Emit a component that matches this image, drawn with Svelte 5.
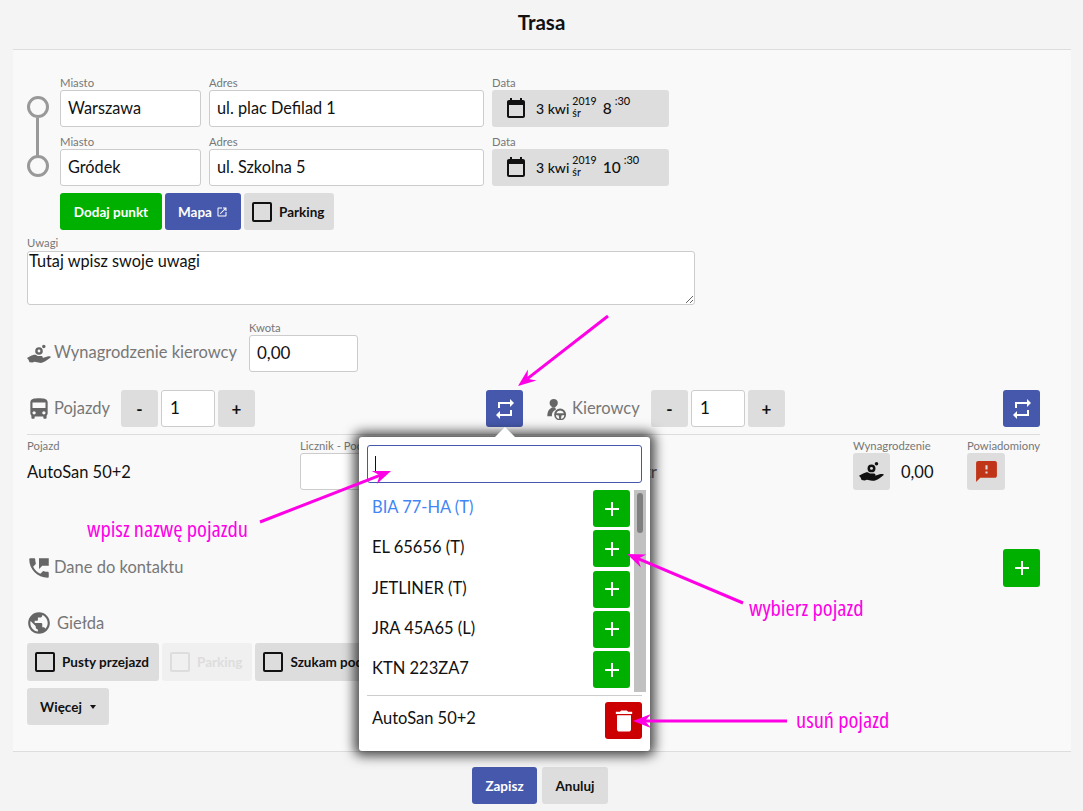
<script lang="ts">
  const repeatPath = "M7 7h10v3l4-4-4-4v3H5v6h2V7zm10 10H7v-3l-4 4 4 4v-3h12v-6h-2v4z";
  const calendarPath = "M19 4h-1V2h-2v2H8V2H6v2H5c-1.11 0-2 .9-2 2v14c0 1.1.89 2 2 2h14c1.1 0 2-.9 2-2V6c0-1.1-.9-2-2-2zm0 16H5V9h14v11z";
  const plusPath = "M19 13h-6v6h-2v-6H5v-2h6V5h2v6h6v2z";

  const points = [
    { city: "Warszawa", address: "ul. plac Defilad 1", hour: "8" },
    { city: "Gródek", address: "ul. Szkolna 5", hour: "10" },
  ];

  const vehicles = [
    { name: "BIA 77-HA (T)", link: true },
    { name: "EL 65656 (T)" },
    { name: "JETLINER (T)" },
    { name: "JRA 45A65 (L)" },
    { name: "KTN 223ZA7" },
  ];

  // annotation arrows drawn over the screenshot: [from x, from y, tip x, tip y]
  const arrows = [
    [608, 316, 518, 386],
    [260, 522, 391, 471],
    [743, 603, 627, 554],
    [787, 721, 633, 721],
  ].map(([x1, y1, x2, y2]) => {
    const len = Math.hypot(x2 - x1, y2 - y1);
    const dx = (x2 - x1) / len;
    const dy = (y2 - y1) / len;
    const head = [
      [x2, y2],
      [x2 - dx * 18 - dy * 7, y2 - dy * 18 + dx * 7],
      [x2 - dx * 12, y2 - dy * 12],
      [x2 - dx * 18 + dy * 7, y2 - dy * 18 - dx * 7],
    ];
    return { x1, y1, x2: x2 - dx * 12, y2: y2 - dy * 12, head: head.map((p) => p.join(",")).join(" ") };
  });
</script>

{#snippet handIcon()}
  <svg viewBox="0 0 24 24" class="icon-fill">
    <circle cx="12" cy="9" r="3.800" />
    <circle cx="12" cy="9" r="1.400" fill="var(--hole)" />
    <circle cx="16.800" cy="4.500" r="1.700" />
    <path d="M0 16l4-2.200 3-1c1.500-.2 2.500.4 3.500 1.200h3.500c1.200 0 1.800.6 1.800 1.300 0 .3-.1.6-.3.8l5-1.600c1.400-.4 3-.2 3.500.6-2 1.900-5.500 4.400-8.500 5.500-1 .4-2 .4-3 .2l-5-1-2 .8-3-.4-1-2.500z" />
  </svg>
{/snippet}

{#snippet plusButton()}
  <button class="btn square green">
    <svg viewBox="0 0 24 24" class="icon-24"><path d={plusPath} /></svg>
  </button>
{/snippet}

{#snippet stepper()}
  <button class="btn square grey step">-</button>
  <input class="count" value="1" />
  <button class="btn square grey step">+</button>
{/snippet}

{#snippet checkButton(label: string, disabled = false)}
  <button class="btn grey check" class:disabled>
    <span class="box"></span>{label}
  </button>
{/snippet}

<div class="page">
  <h1>Trasa</h1>

  <main class="panel">
    <section class="route">
      {#each points as point, i}
        <div class="point">
          <div class="marker" class:first={i === 0}></div>
          <label class="field city">
            <span>Miasto</span>
            <input value={point.city} />
          </label>
          <label class="field address">
            <span>Adres</span>
            <input value={point.address} />
          </label>
          <div class="field date">
            <span>Data</span>
            <button class="date-btn">
              <svg viewBox="0 0 24 24" class="calendar"><path d={calendarPath} /><rect x="5" y="5" width="14" height="4" /></svg>
              <b class="day">3 kwi</b>
              <span class="year"><i>2019</i><i>śr</i></span>
              <b class="hour">{point.hour}</b>
              <i class="minute">:30</i>
            </button>
          </div>
        </div>
      {/each}

      <div class="route-actions">
        <button class="btn green">Dodaj punkt</button>
        <button class="btn blue map">
          Mapa
          <svg viewBox="0 0 24 24" class="external"><path d="M19 19H5V5h7V3H5c-1.11 0-2 .9-2 2v14c0 1.1.89 2 2 2h14c1.1 0 2-.9 2-2v-7h-2v7zM14 3v2h3.59l-9.83 9.83 1.41 1.41L19 6.41V10h2V3h-7z" /></svg>
        </button>
        {@render checkButton("Parking")}
      </div>
    </section>

    <label class="field notes">
      <span>Uwagi</span>
      <textarea>Tutaj wpisz swoje uwagi</textarea>
    </label>

    <div class="pay">
      <div class="heading pay-title">
        <span class="hand-icon">{@render handIcon()}</span>
        Wynagrodzenie kierowcy
      </div>
      <label class="field amount">
        <span>Kwota</span>
        <input value="0,00" />
      </label>
    </div>

    <div class="fleet">
      <div class="fleet-side left">
        <div class="heading fleet-title">
          <svg viewBox="0 0 24 24" class="head-icon icon-fill"><path d="M4 16c0 .88.39 1.67 1 2.22V20c0 .55.45 1 1 1h1c.55 0 1-.45 1-1v-1h8v1c0 .55.45 1 1 1h1c.55 0 1-.45 1-1v-1.78c.61-.55 1-1.34 1-2.22V6c0-3.5-3.58-4-8-4s-8 .5-8 4v10zm3.5 1c-.83 0-1.5-.67-1.5-1.5S6.67 14 7.5 14s1.5.67 1.5 1.5S8.33 17 7.5 17zm9 0c-.83 0-1.5-.67-1.5-1.5s.67-1.5 1.5-1.5 1.5.67 1.5 1.5-.67 1.5-1.5 1.5zm1.5-6H6V6h12v5z" /></svg>
          Pojazdy
        </div>
        {@render stepper()}
        <button class="btn square blue swap">
          <svg viewBox="0 0 24 24" class="icon-24"><path d={repeatPath} /></svg>
        </button>
      </div>
      <div class="fleet-side right">
        <div class="heading fleet-title drivers">
          <svg viewBox="0 0 24 24" class="driver-icon icon-fill">
            <circle cx="9.500" cy="5.500" r="4.500" />
            <path d="M8 10h3l1 2.500a7.500 7.500 0 0 0-4.500 7.500H2.500c0-4 1-7 3.500-8.500z" />
            <path fill-rule="evenodd" d="M16.500 11.500a6.500 6.500 0 1 0 0 13 6.500 6.500 0 0 0 0-13zm0 2a4.500 4.500 0 0 1 4.200 3h-8.400a4.500 4.500 0 0 1 4.200-3zm-4.500 5l3 .5 .5 3.900a4.500 4.500 0 0 1-3.500-4.400zm9 0a4.500 4.500 0 0 1-3.500 4.400l.5-3.900z" />
          </svg>
          Kierowcy
        </div>
        {@render stepper()}
        <button class="btn square blue swap">
          <svg viewBox="0 0 24 24" class="icon-24"><path d={repeatPath} /></svg>
        </button>
      </div>
    </div>

    <div class="assignment">
      <div class="field vehicle">
        <span>Pojazd</span>
        <strong>AutoSan 50+2</strong>
      </div>
      <label class="field counter">
        <span>Licznik - Początek</span>
        <input />
      </label>
      <div class="driver-name">Piotr</div>
      <div class="field wage">
        <span>Wynagrodzenie</span>
        <div class="wage-row">
          <button class="btn square grey dark-hand">{@render handIcon()}</button>
          <strong>0,00</strong>
        </div>
      </div>
      <div class="field notified">
        <span>Powiadomiony</span>
        <button class="btn square grey">
          <svg viewBox="0 0 24 24" class="alert"><path d="M20 2H4c-1.100 0-1.990.9-1.990 2L2 22l4-4h14c1.100 0 2-.9 2-2V4c0-1.100-.9-2-2-2zm-7 12h-2v-2h2v2zm0-4h-2V6h2v4z" /></svg>
        </button>
      </div>
    </div>

    <div class="contact">
      <div class="heading">
        <svg viewBox="0 0 24 24" class="head-icon icon-fill"><path d="M20 15.500c-1.250 0-2.450-.2-3.570-.57-.35-.11-.74-.03-1.020.24l-2.200 2.200c-2.830-1.440-5.150-3.750-6.590-6.580l2.200-2.210c.28-.27.36-.66.25-1.010C8.700 6.450 8.500 5.250 8.500 4c0-.55-.45-1-1-1H4c-.55 0-1 .45-1 1 0 9.390 7.610 17 17 17 .55 0 1-.45 1-1v-3.500c0-.55-.45-1-1-1zM12 3v10l3-3h6V3h-9z" /></svg>
        Dane do kontaktu
      </div>
      {@render plusButton()}
    </div>

    <div class="heading exchange">
      <svg viewBox="0 0 24 24" class="globe icon-fill"><path d="M12 2C6.480 2 2 6.480 2 12s4.480 10 10 10 10-4.480 10-10S17.520 2 12 2zm-1 17.930c-3.950-.49-7-3.850-7-7.930 0-.62.08-1.210.21-1.790L9 15v1c0 1.100.9 2 2 2v1.930zm6.900-2.540c-.26-.81-1-1.390-1.900-1.390h-1v-3c0-.55-.45-1-1-1H8v-2h2c.55 0 1-.45 1-1V7h2c1.100 0 2-.9 2-2v-.41c2.930 1.190 5 4.060 5 7.410 0 2.080-.8 3.970-2.100 5.390z" /></svg>
      Giełda
    </div>
    <div class="exchange-actions">
      {@render checkButton("Pusty przejazd")}
      {@render checkButton("Parking", true)}
      {@render checkButton("Szukam pod")}
    </div>
    <button class="btn grey more">Więcej <span class="caret"></span></button>
  </main>

  <footer>
    <button class="btn blue save">Zapisz</button>
    <button class="btn grey cancel">Anuluj</button>
  </footer>

  <div class="popover">
    <div class="search">
      <input />
      <span class="text-caret"></span>
    </div>
    <div class="list">
      <div class="rows">
        {#each vehicles as vehicle}
          <div class="row">
            <span class:link={vehicle.link}>{vehicle.name}</span>
            {@render plusButton()}
          </div>
        {/each}
      </div>
      <div class="scrollbar"><div class="thumb"></div></div>
    </div>
    <div class="selected">
      <span>AutoSan 50+2</span>
      <button class="btn square red">
        <svg viewBox="0 0 24 24"><path d="M6 19c0 1.100.9 2 2 2h8c1.100 0 2-.9 2-2V7H6v12zM19 4h-3.500l-1-1h-5l-1 1H5v2h14V4z" /></svg>
      </button>
    </div>
  </div>

  <svg class="arrows" viewBox="0 0 1083 811">
    {#each arrows as arrow}
      <line x1={arrow.x1} y1={arrow.y1} x2={arrow.x2} y2={arrow.y2} />
      <polygon points={arrow.head} />
    {/each}
  </svg>
  <span class="note note-search">wpisz nazwę pojazdu</span>
  <span class="note note-pick">wybierz pojazd</span>
  <span class="note note-remove">usuń pojazd</span>
</div>

<style>
  :global(body) {
    background: #f4f4f4;
    font-family: Lato, "Open Sans", sans-serif;
    color: #111;
  }

  .page {
    position: relative;
    width: 1083px;
    height: 811px;
    overflow: hidden;
  }

  h1 {
    margin: 0;
    height: 49px;
    line-height: 45px;
    text-align: center;
    font-size: 20.500px;
    font-weight: 700;
  }

  .panel {
    box-sizing: border-box;
    height: 703px;
    margin: 0 12px 0 13px;
    padding: 27px 31px 0 14px;
    background: #f9f9f9;
    border-top: 1px solid #ddd;
    border-bottom: 1px solid #ddd;
  }

  input,
  textarea {
    box-sizing: border-box;
    border: 1px solid #ccc;
    border-radius: 3px;
    background: #fff;
    color: #111;
    font-family: inherit;
    outline: none;
  }

  input {
    height: 37px;
    padding: 0 7px 3px;
    font-size: 16.300px;
  }

  .field {
    display: flex;
    flex-direction: column;
  }

  .field > span {
    height: 13px;
    line-height: 11px;
    font-size: 11.300px;
    color: #777;
  }

  .point {
    position: relative;
    display: flex;
    gap: 8px;
    margin-bottom: 9px;
    padding-left: 33px;
  }

  .marker {
    position: absolute;
    left: 0;
    top: 19px;
    box-sizing: border-box;
    width: 22px;
    height: 22px;
    border: 3px solid #999;
    border-radius: 50%;
  }

  .marker.first::after {
    content: "";
    position: absolute;
    left: 6px;
    top: 19px;
    width: 3px;
    height: 39px;
    background: #999;
  }

  .city input { width: 141px; }
  .address input { width: 275px; }

  .date-btn {
    display: flex;
    align-items: center;
    width: 177px;
    height: 37px;
    padding: 0 0 1px 12px;
    border: none;
    border-radius: 3px;
    background: #ddd;
    color: #111;
    font-family: inherit;
  }

  .calendar {
    width: 24px;
    height: 24px;
    fill: #111;
  }

  .day {
    margin-left: 8px;
    font-size: 14px;
    font-weight: 500;
  }

  .year {
    display: flex;
    flex-direction: column;
    margin: -3px 0 0 3px;
    font-size: 10.500px;
    line-height: 12px;
    text-align: left;
  }

  .year i,
  .minute {
    font-style: normal;
    font-weight: 500;
  }

  .hour {
    margin-left: 6px;
    font-size: 15.500px;
    font-weight: 500;
  }

  .minute {
    align-self: flex-start;
    margin: 4px 0 0 3px;
    font-size: 11px;
  }

  .btn {
    display: inline-flex;
    align-items: center;
    justify-content: center;
    box-sizing: border-box;
    height: 37px;
    padding: 0;
    border: none;
    border-radius: 3px;
    font-family: inherit;
    font-size: 13.500px;
    font-weight: 700;
    flex: none;
  }

  .green { background: #00b000; color: #fff; }
  .blue { background: #4658ab; color: #fff; }
  .grey { background: #ddd; color: #111; }
  .red { background: #cc0000; color: #fff; }

  .square { width: 37px; }

  .icon-24 {
    width: 24px;
    height: 24px;
    fill: currentColor;
  }

  .route-actions {
    display: flex;
    gap: 3px;
    margin: -2px 0 0 33px;
  }

  .route-actions .green { width: 102px; }
  .route-actions .blue { width: 76px; }

  .external {
    width: 12px;
    height: 12px;
    margin-left: 4px;
    fill: #fff;
  }

  .check {
    gap: 7px;
    padding: 0 10px 0 8px;
  }

  .box {
    box-sizing: border-box;
    width: 20px;
    height: 20px;
    border: 2px solid #111;
    border-radius: 2px;
  }

  .check.disabled {
    background: #f0f0f0;
    color: #ddd;
  }

  .check.disabled .box {
    border-color: #ddd;
  }

  .notes {
    margin-top: 7px;
  }

  textarea {
    display: block;
    width: 668px;
    height: 54px;
    margin-top: 1px;
    padding: 0 1px;
    font-size: 16.300px;
    line-height: 18px;
  }

  .heading {
    display: flex;
    align-items: center;
    gap: 5px;
    font-size: 16.500px;
    color: #777;
  }

  .head-icon,
  .driver-icon,
  .globe {
    display: block;
    flex: none;
  }

  .head-icon {
    width: 26px;
    height: 26px;
    margin: 2px -3px 0 -1px;
  }

  .driver-icon {
    width: 22px;
    height: 22px;
    margin-top: 2px;
  }

  .globe {
    width: 26px;
    height: 26px;
    margin: 0 -2px 0 -1px;
  }

  .hand-icon {
    --hole: #f9f9f9;
    width: 24px;
    height: 24px;
    margin: 2px -2px 0 0;
    flex: none;
  }

  .icon-fill {
    display: block;
    fill: #666;
  }

  .pay {
    display: flex;
    gap: 12px;
    margin-top: 17px;
  }

  .pay-title {
    align-self: flex-end;
    height: 35px;
    padding-bottom: 2px;
    line-height: 35px;
  }

  .amount input {
    width: 109px;
    font-size: 17px;
  }

  .fleet {
    display: flex;
    gap: 22px;
    margin-top: 18px;
    padding-bottom: 7px;
    border-bottom: 1px solid #ddd;
  }

  .fleet-side {
    display: flex;
    align-items: center;
    gap: 3px;
  }

  .fleet-side.left { width: 496px; }
  .fleet-side.right { flex: 1; }

  .fleet-title {
    width: 91px;
    padding-bottom: 2px;
  }

  .fleet-title.drivers { width: 103px; }

  .step {
    font-size: 17px;
  }

  .count {
    width: 54px;
    padding: 0 8px 2px;
    font-size: 17px;
  }

  .swap {
    margin-left: auto;
  }

  .assignment {
    display: flex;
    margin-top: 5px;
  }

  .assignment strong {
    font-weight: 400;
    font-size: 16.500px;
  }

  .vehicle { width: 273px; }
  .vehicle strong { margin-top: 9px; }

  .counter { width: 130px; }
  .counter input { width: 100%; }

  .driver-name {
    width: 423px;
    padding: 21px 0 0 191px;
    box-sizing: border-box;
    font-size: 17px;
    color: #666;
    white-space: nowrap;
  }

  .wage { width: 114px; }

  .wage-row {
    display: flex;
    align-items: center;
    gap: 11px;
  }

  .dark-hand {
    --hole: #ddd;
  }

  .dark-hand svg {
    width: 25px;
    height: 25px;
    fill: #111;
  }

  .notified {
    width: 73px;
  }

  .notified span {
    white-space: nowrap;
  }

  .notified button {
    width: 38px;
  }

  .alert {
    width: 25px;
    height: 25px;
    fill: #c03418;
  }

  .contact {
    display: flex;
    align-items: center;
    justify-content: space-between;
    margin-top: 59px;
  }

  .contact .heading {
    padding-bottom: 2px;
  }

  .contact .btn {
    height: 38px;
  }

  .exchange {
    margin-top: 23px;
    gap: 7px;
  }

  .exchange-actions {
    display: flex;
    gap: 3px;
    margin-top: 7px;
  }

  .exchange-actions .btn {
    height: 38px;
  }

  .more {
    gap: 8px;
    width: 82px;
    margin-top: 7px;
  }

  .caret {
    width: 0;
    height: 0;
    border: 3.500px solid transparent;
    border-top: 4px solid #111;
    border-bottom: none;
  }

  footer {
    display: flex;
    justify-content: center;
    gap: 5px;
    margin: 15px 0 0 -3px;
  }

  .save { width: 65px; }
  .cancel { width: 66px; }

  .popover {
    position: absolute;
    left: 359px;
    top: 437px;
    box-sizing: border-box;
    width: 291px;
    height: 314px;
    padding: 8px;
    background: #fff;
    border-radius: 3px;
    box-shadow: 0 0 12px 5px rgba(0, 0, 0, 0.7);
    font-size: 16.500px;
  }

  .popover::before {
    content: "";
    position: absolute;
    left: 136px;
    top: -10px;
    border: 10px solid transparent;
    border-top: none;
    border-bottom-color: #fff;
  }

  .search {
    position: relative;
  }

  .search input {
    display: block;
    width: 100%;
    height: 38px;
    border-color: #4658ab;
  }

  .text-caret {
    position: absolute;
    left: 8px;
    top: 11px;
    width: 1px;
    height: 16px;
    background: #111;
  }

  .list {
    display: flex;
    margin-top: 7px;
    height: 202px;
  }

  .rows {
    width: 263px;
    flex: none;
  }

  .row {
    display: flex;
    align-items: center;
    justify-content: space-between;
    height: 37px;
    margin-bottom: 3.250px;
    padding-left: 5px;
  }

  .row span {
    padding-bottom: 3px;
  }

  .link {
    color: #4285f4;
  }

  .scrollbar {
    width: 12px;
    flex: none;
    margin-left: 4px;
    padding: 3px;
    box-sizing: border-box;
    background: #c1c1c1;
  }

  .thumb {
    height: 40px;
    border-radius: 3px;
    background: #7f7f7f;
  }

  .selected {
    display: flex;
    align-items: center;
    justify-content: space-between;
    margin-top: 3px;
    padding: 6px 0 0 5px;
    border-top: 1px solid #ccc;
  }

  .selected span {
    padding-bottom: 5px;
  }

  .red svg {
    width: 28px;
    height: 28px;
    fill: #fff;
  }

  .arrows {
    position: absolute;
    left: 0;
    top: 0;
    width: 1083px;
    height: 811px;
    pointer-events: none;
  }

  .arrows line {
    stroke: #ff00e6;
    stroke-width: 3;
  }

  .arrows polygon {
    fill: #ff00e6;
  }

  .note {
    position: absolute;
    font-family: "Open Sans", sans-serif;
    font-stretch: semi-condensed;
    font-size: 22.500px;
    line-height: 26px;
    color: #ff00e6;
    white-space: nowrap;
  }

  .note-search { left: 87px; top: 516px; }
  .note-pick { left: 749px; top: 595px; }
  .note-remove { left: 796px; top: 707px; }
</style>
